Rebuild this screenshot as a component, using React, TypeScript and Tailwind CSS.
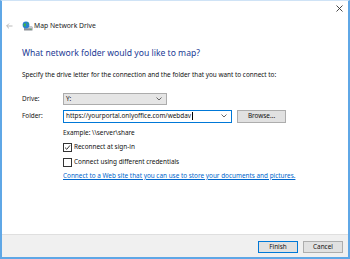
import { Fragment } from "react";

function Chevron({ className = "" }: { className?: string }) {
  return (
    <svg width="6" height="4" viewBox="0 0 6 4" className={className}>
      <path d="M0.5 0.5 L3 3 L5.5 0.5" fill="none" stroke="#555" strokeWidth="0.9" />
    </svg>
  );
}

function DriveIcon() {
  return (
    <svg width="11" height="11" viewBox="0 0 11 11">
      <rect x="2" y="5.5" width="8.5" height="4" rx="0.6" fill="#8a8f96" />
      <rect x="2.5" y="6" width="7.5" height="1.4" fill="#c9ccd1" />
      <circle cx="8.6" cy="8.3" r="0.5" fill="#3fd14a" />
      <circle cx="4" cy="4" r="3.4" fill="#2a7fd4" />
      <path d="M1.6 3.2 C2.6 1.6 3.6 2.2 4 3 C4.4 3.8 3.2 4.6 3.6 5.6 C2.6 6 1.2 5 1.6 3.2 Z" fill="#3bb54a" />
      <path d="M4.8 1.2 C5.8 1.4 6.8 2.3 6.6 3.4 C5.8 3.2 5 2.4 4.8 1.2 Z" fill="#3bb54a" />
    </svg>
  );
}

function Checkbox({ checked }: { checked?: boolean }) {
  return (
    <span className="w-[9px] h-[9px] border border-[#333] bg-white flex items-center justify-center shrink-0">
      {checked && (
        <svg width="7" height="7" viewBox="0 0 7 7">
          <path d="M1 3.6 L2.8 5.3 L6 1.4" fill="none" stroke="#222" strokeWidth="0.9" />
        </svg>
      )}
    </span>
  );
}

function FormRow({ label, children, h }: { label: string; children: React.ReactNode; h: string }) {
  return (
    <div className={`flex items-center ${h}`}>
      <span className="w-[41px] text-[6.4px]">{label}</span>
      {children}
    </div>
  );
}

export default function App() {
  return (
    <div className="w-[350px] h-[259px] flex flex-col bg-white border-x-2 border-b-2 border-t border-[#5fa7e6] border-t-[#cfe3f6] text-[#111] font-['Noto_Sans',sans-serif] leading-none">
      <div className="h-[14px] flex justify-end items-center pr-[5px]">
        <svg width="7" height="7" viewBox="0 0 7 7">
          <path d="M0.5 0.5 L6.5 6.5 M6.5 0.5 L0.5 6.5" stroke="#333" strokeWidth="0.9" />
        </svg>
      </div>

      <div className="h-[22px] flex items-center">
        <svg width="7" height="6" viewBox="0 0 7 6" className="ml-[4px]">
          <path d="M6.5 3 L0.8 3 M3 0.6 L0.6 3 L3 5.4" fill="none" stroke="#a8a8a8" strokeWidth="0.8" />
        </svg>
        <span className="ml-[9px]"><DriveIcon /></span>
        <span className="ml-[1px] text-[6.8px] text-[#222]">Map Network Drive</span>
      </div>

      <div className="pl-[20px] flex flex-col">
        <div className="mt-[9px] h-[14px] flex items-center text-[8.6px] text-[#1b3a94]">
          What network folder would you like to map?
        </div>
        <div className="mt-[10px] h-[10px] flex items-center text-[6.4px]">
          Specify the drive letter for the connection and the folder that you want to connect to:
        </div>

        <div className="mt-[13px]">
          <FormRow label="Drive:" h="h-[12px]">
            <div className="w-[104px] h-[12px] bg-[#e5e5e5] border border-[#acacac] flex items-center justify-between pl-[2px] pr-[4px] text-[6.4px]">
              <span>Y:</span>
              <Chevron />
            </div>
          </FormRow>
        </div>
        <div className="mt-[4px]">
          <FormRow label="Folder:" h="h-[14px]">
            <div className="w-[169px] h-[13px] bg-white border border-[#0078d7] flex items-center justify-between pl-[2px] pr-[4px] text-[6.4px]">
              <span className="flex items-center">
                https://yourportal.onlyoffice.com/webdav
                <span className="w-px h-[8px] bg-black ml-px" />
              </span>
              <Chevron />
            </div>
            <button className="ml-[5px] w-[49px] h-[13px] bg-[#e1e1e1] border border-[#adadad] text-[6.4px] flex items-center justify-center">
              Browse...
            </button>
          </FormRow>
        </div>

        <div className="pl-[41px] flex flex-col">
          <div className="mt-[5px] h-[10px] flex items-center text-[6.4px]">Example: \\server\share</div>
          {[
            { t: "Reconnect at sign-in", c: true, mt: "mt-[4px]" },
            { t: "Connect using different credentials", c: false, mt: "mt-[5px]" },
          ].map((r) => (
            <Fragment key={r.t}>
              <div className={`${r.mt} h-[10px] flex items-center gap-[2px] text-[6.4px]`}>
                <Checkbox checked={r.c} />
                <span>{r.t}</span>
              </div>
            </Fragment>
          ))}
          <div className="mt-[4px] h-[10px] flex items-center text-[6.4px] text-[#0066cc] underline">
            Connect to a Web site that you can use to store your documents and pictures.
          </div>
        </div>
      </div>

      <div className="flex-1" />

      <div className="h-[23px] border-t border-[#dfdfdf] bg-[#f0f0f0] flex justify-end items-start pt-[6px] pr-[5px] gap-[5px]">
        <button className="w-[40px] h-[12px] bg-[#e1e1e1] border-[1.5px] border-[#0078d7] text-[6.4px] flex items-center justify-center">
          Finish
        </button>
        <button className="w-[40px] h-[12px] bg-[#e1e1e1] border border-[#adadad] text-[6.4px] flex items-center justify-center">
          Cancel
        </button>
      </div>
    </div>
  );
}
